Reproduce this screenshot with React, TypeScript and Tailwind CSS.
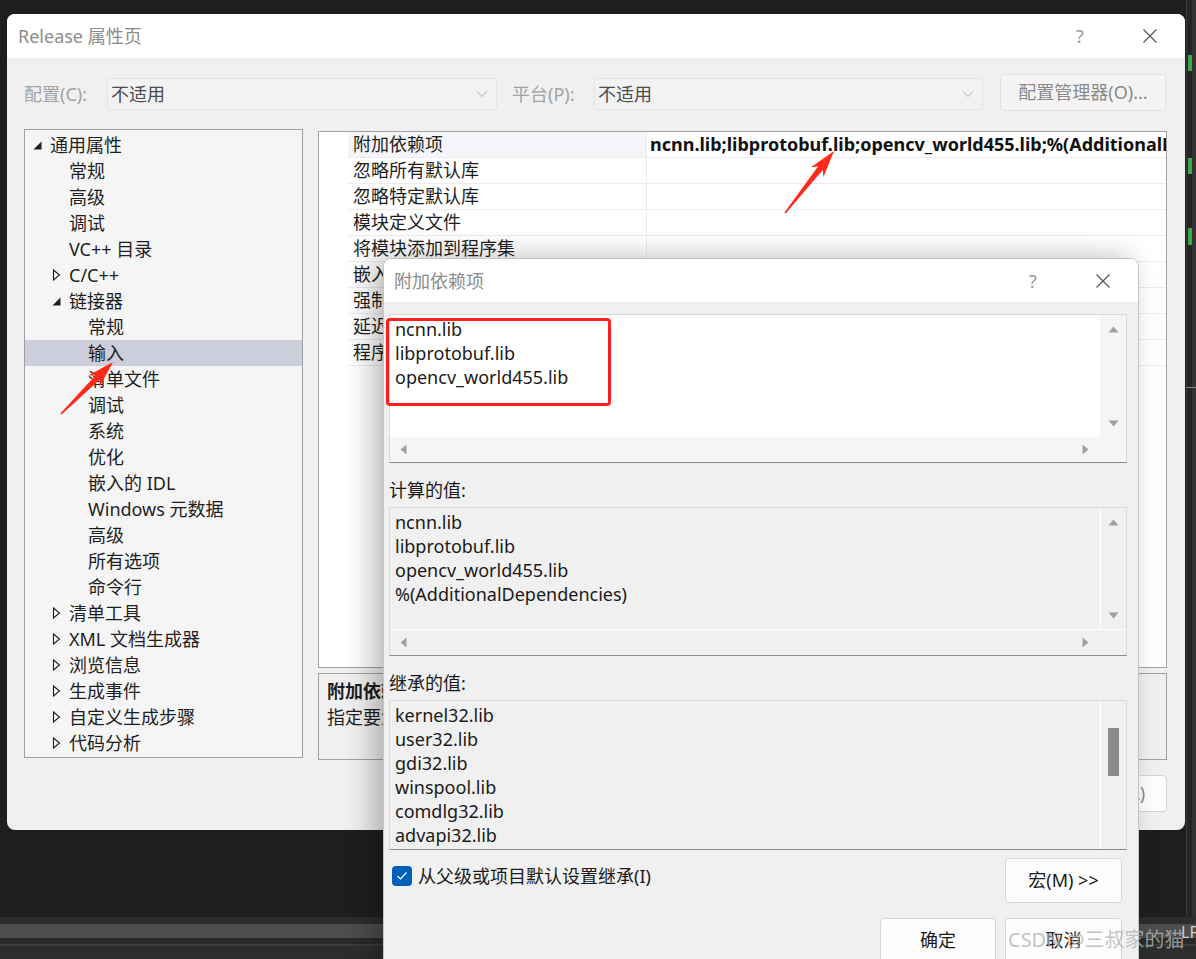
import React from "react";

const FONT = "font-['Noto_Sans','Noto_Sans_CJK_SC',sans-serif]";

type TreeItem = { l: 0 | 1 | 2; t: string; a?: "open" | "closed"; sel?: boolean };

const TREE: TreeItem[] = [
  { l: 0, t: "通用属性", a: "open" },
  { l: 1, t: "常规" },
  { l: 1, t: "高级" },
  { l: 1, t: "调试" },
  { l: 1, t: "VC++ 目录" },
  { l: 1, t: "C/C++", a: "closed" },
  { l: 1, t: "链接器", a: "open" },
  { l: 2, t: "常规" },
  { l: 2, t: "输入", sel: true },
  { l: 2, t: "清单文件" },
  { l: 2, t: "调试" },
  { l: 2, t: "系统" },
  { l: 2, t: "优化" },
  { l: 2, t: "嵌入的 IDL" },
  { l: 2, t: "Windows 元数据" },
  { l: 2, t: "高级" },
  { l: 2, t: "所有选项" },
  { l: 2, t: "命令行" },
  { l: 1, t: "清单工具", a: "closed" },
  { l: 1, t: "XML 文档生成器", a: "closed" },
  { l: 1, t: "浏览信息", a: "closed" },
  { l: 1, t: "生成事件", a: "closed" },
  { l: 1, t: "自定义生成步骤", a: "closed" },
  { l: 1, t: "代码分析", a: "closed" },
];

const GRID = [
  "附加依赖项",
  "忽略所有默认库",
  "忽略特定默认库",
  "模块定义文件",
  "将模块添加到程序集",
  "嵌入托管资源文件",
  "强制符号引用",
  "延迟加载的 DLL",
  "程序集链接资源",
];

function OpenTri() {
  return (
    <svg width="9" height="9" viewBox="0 0 9 9">
      <polygon points="8.5,0.5 8.5,8.5 0.5,8.5" fill="#1e1e1e" />
    </svg>
  );
}
function ClosedTri() {
  return (
    <svg width="9" height="12" viewBox="0 0 9 12">
      <polygon points="1.5,1 7.5,6 1.5,11" fill="none" stroke="#1e1e1e" strokeWidth="1.1" />
    </svg>
  );
}

function CloseX({ color = "#555" }: { color?: string }) {
  return (
    <svg width="16" height="16" viewBox="0 0 16 16">
      <path d="M1.5 1.5 L14.5 14.5 M14.5 1.5 L1.5 14.5" stroke={color} strokeWidth="1.2" fill="none" />
    </svg>
  );
}

function Chevron() {
  return (
    <svg width="12" height="8" viewBox="0 0 12 8">
      <polyline points="1,1.5 6,6.5 11,1.5" fill="none" stroke="#a8a8a8" strokeWidth="1" />
    </svg>
  );
}

function TriUp() {
  return (
    <svg width="11" height="7" viewBox="0 0 11 7">
      <polygon points="5.5,0.5 10.5,6.5 0.5,6.5" fill="#a0a0a0" />
    </svg>
  );
}
function TriDown() {
  return (
    <svg width="11" height="7" viewBox="0 0 11 7">
      <polygon points="0.5,0.5 10.5,0.5 5.5,6.5" fill="#a0a0a0" />
    </svg>
  );
}
function TriLeft() {
  return (
    <svg width="7" height="11" viewBox="0 0 7 11">
      <polygon points="6.5,0.5 6.5,10.5 0.5,5.5" fill="#a0a0a0" />
    </svg>
  );
}
function TriRight() {
  return (
    <svg width="7" height="11" viewBox="0 0 7 11">
      <polygon points="0.5,0.5 6.5,5.5 0.5,10.5" fill="#a0a0a0" />
    </svg>
  );
}

function arrowPoints(x1: number, y1: number, x2: number, y2: number) {
  const dx = x2 - x1;
  const dy = y2 - y1;
  const len = Math.hypot(dx, dy);
  const ux = dx / len;
  const uy = dy / len;
  const nx = -uy;
  const ny = ux;
  const head = 22;
  const neckX = x2 - ux * head;
  const neckY = y2 - uy * head;
  const barbX = x2 - ux * (head + 5);
  const barbY = y2 - uy * (head + 5);
  const p = (x: number, y: number) => `${x.toFixed(1)},${y.toFixed(1)}`;
  return [
    p(x1 + nx * 0.8, y1 + ny * 0.8),
    p(neckX + nx * 3, neckY + ny * 3),
    p(barbX + nx * 8, barbY + ny * 8),
    p(x2, y2),
    p(barbX - nx * 8, barbY - ny * 8),
    p(neckX - nx * 3, neckY - ny * 3),
    p(x1 - nx * 0.8, y1 - ny * 0.8),
  ].join(" ");
}

function TitleBar({ title, h, pl }: { title: string; h: string; pl: string }) {
  return (
    <div className={`${h} bg-white flex items-center shrink-0`}>
      <span className={`${pl} text-[18px] text-[#8c8c8c] leading-none`}>{title}</span>
      <div className="ml-auto flex items-center pr-[12px]">
        <div className="w-[46px] mr-[24px] flex justify-center text-[18px] text-[#9a9a9a] leading-none">?</div>
        <div className="w-[46px] flex justify-center">
          <CloseX />
        </div>
      </div>
    </div>
  );
}

function Btn({
  children,
  w,
  h,
  cls = "",
  color = "text-[#1a1a1a]",
}: {
  children: React.ReactNode;
  w: string;
  h: string;
  cls?: string;
  color?: string;
}) {
  return (
    <div
      className={`${w} ${h} ${cls} ${color} rounded-[4px] border border-[#d5d5d5] bg-[#fdfdfd] flex items-center justify-center text-[18px] shrink-0`}
    >
      {children}
    </div>
  );
}

function Combo() {
  return (
    <div className="mt-[4px] h-[32px] w-full border border-[#e3e3e3] bg-[#f2f2f2] rounded-[3px] flex items-center pl-[3px] pr-[8px]">
      <span className="text-[#4a4a4a]">不适用</span>
      <span className="ml-auto">
        <Chevron />
      </span>
    </div>
  );
}

function MainWindow() {
  return (
    <div className="absolute left-[7px] top-[14px] w-[1178px] h-[816px] rounded-[8px] overflow-hidden bg-[#f0f0f0] flex flex-col">
      <TitleBar title="Release 属性页" h="h-[44px]" pl="pl-[11px]" />

      {/* config row */}
      <div className="flex items-start h-[37px] mt-[16px] pl-[17px] text-[18px]">
        <div className="w-[83px] mt-[4px] h-[32px] flex items-center text-[#a3a3a3]">配置(C):</div>
        <div className="w-[390px]">
          <Combo />
        </div>
        <div className="w-[82px] ml-[15px] mt-[4px] h-[32px] flex items-center text-[#a3a3a3]">平台(P):</div>
        <div className="w-[389px]">
          <Combo />
        </div>
        <div className="w-[166px] h-[37px] ml-[17px] border border-[#e1e1e1] bg-[#f4f4f4] rounded-[4px] flex items-center justify-center text-[#8a8a8a]">
          配置管理器(O)...
        </div>
      </div>

      {/* main area */}
      <div className="flex items-start mt-[18px] pl-[17px]">
        <div className="w-[279px] h-[629px] border border-[#a0a0a0] bg-[#f5f5f5] pt-[2px] text-[18px] text-[#1e1e1e]">
          {TREE.map((it, i) => {
            const pl = it.l === 0 ? "pl-[8px]" : it.l === 1 ? "pl-[27px]" : "pl-[46px]";
            return (
              <div key={i} className={`h-[26px] flex items-center ${pl} ${it.sel ? "bg-[#cccedb]" : ""}`}>
                <div className="w-[17px] flex items-center">
                  {it.a === "open" ? <OpenTri /> : it.a === "closed" ? <ClosedTri /> : null}
                </div>
                <span className="leading-none whitespace-nowrap">{it.t}</span>
              </div>
            );
          })}
        </div>

        <div className="w-[849px] ml-[15px] flex flex-col">
          <div className="mt-[2px] h-[537px] border border-[#a0a0a0] bg-white overflow-hidden">
            {GRID.map((n, i) => (
              <div key={i} className="h-[26px] flex">
                <div className="w-[29px] shrink-0" />
                <div
                  className={`w-[299px] shrink-0 border-b border-r border-[#ececec] flex items-center pl-[5px] text-[18px] text-[#1e1e1e] whitespace-nowrap overflow-hidden ${
                    i === 0 ? "bg-[#f3f5f8]" : ""
                  }`}
                >
                  {n}
                </div>
                <div className="flex-1 min-w-0 border-b border-[#ececec] flex items-center pl-[3px] overflow-hidden">
                  {i === 0 && (
                    <span className="text-[18px] font-bold text-[#111] whitespace-nowrap">
                      ncnn.lib;libprotobuf.lib;opencv_world455.lib;%(AdditionalDependencies)
                    </span>
                  )}
                </div>
              </div>
            ))}
          </div>
          <div className="mt-[5px] h-[87px] border border-[#a0a0a0] px-[8px] pt-[4px] text-[18px] text-[#1e1e1e] leading-[26px]">
            <div className="font-bold">附加依赖项</div>
            <div>指定要添加到链接命令行的附加项。[例如 kernel32.lib]</div>
          </div>
        </div>
      </div>

      {/* bottom buttons */}
      <div className="flex justify-end gap-[9px] pr-[18px] mt-[15px]">
        <Btn w="w-[102px]" h="h-[37px]">确定</Btn>
        <Btn w="w-[102px]" h="h-[37px]">取消</Btn>
        <Btn w="w-[102px]" h="h-[37px]" color="text-[#8a8a8a]">
          应用(A)
        </Btn>
      </div>
    </div>
  );
}

function Lines({ lines }: { lines: string[] }) {
  return (
    <div className="pl-[5px] pt-[2px] text-[18px] leading-[24px] text-[#1a1a1a] whitespace-nowrap">
      {lines.map((l, i) => (
        <div key={i}>{l}</div>
      ))}
    </div>
  );
}

function Dialog() {
  return (
    <div className="absolute left-[383px] top-[258px] w-[756px] h-[720px] rounded-t-[8px] overflow-hidden bg-[#f0f0f0] border border-[#c4c4c4] shadow-[-10px_0_28px_rgba(0,0,0,0.28)] flex flex-col">
      <TitleBar title="附加依赖项" h="h-[43px]" pl="pl-[10px]" />
      <div className="flex flex-col pl-[5px] pr-[11px] pt-[12px]">
        {/* box 1 */}
        <div className="h-[149px] border border-[#dadada] border-b-[#8a8a8a] flex flex-col">
          <div className="flex flex-1 min-h-0">
            <div className="flex-1 bg-white">
              <Lines lines={["ncnn.lib", "libprotobuf.lib", "opencv_world455.lib"]} />
            </div>
            <div className="w-[26px] bg-[#f5f5f5] flex flex-col items-center justify-between pt-[11px] pb-[10px]">
              <TriUp />
              <TriDown />
            </div>
          </div>
          <div className="h-[25px] flex">
            <div className="flex-1 bg-[#f5f5f5] flex items-center justify-between pl-[10px] pr-[11px]">
              <TriLeft />
              <TriRight />
            </div>
            <div className="w-[26px] bg-[#f5f5f5]" />
          </div>
        </div>

        <div className="h-[44px] pt-[15px] text-[18px] leading-[24px] text-[#1a1a1a]">计算的值:</div>

        {/* box 2 */}
        <div className="h-[149px] border border-[#dadada] border-b-[#8a8a8a] flex flex-col bg-[#f0f0f0]">
          <div className="flex flex-1 min-h-0">
            <div className="flex-1">
              <Lines lines={["ncnn.lib", "libprotobuf.lib", "opencv_world455.lib", "%(AdditionalDependencies)"]} />
            </div>
            <div className="w-[26px] border-l border-white flex flex-col items-center justify-between pt-[11px] pb-[10px]">
              <TriUp />
              <TriDown />
            </div>
          </div>
          <div className="h-[26px] flex border-t border-white">
            <div className="flex-1 flex items-center justify-between pl-[10px] pr-[11px]">
              <TriLeft />
              <TriRight />
            </div>
            <div className="w-[26px]" />
          </div>
        </div>

        <div className="h-[44px] pt-[15px] text-[18px] leading-[24px] text-[#1a1a1a]">继承的值:</div>

        {/* box 3 */}
        <div className="h-[150px] border border-[#dadada] border-b-[#8a8a8a] flex bg-[#f0f0f0] overflow-hidden">
          <div className="flex-1">
            <Lines lines={["kernel32.lib", "user32.lib", "gdi32.lib", "winspool.lib", "comdlg32.lib", "advapi32.lib"]} />
          </div>
          <div className="w-[26px] border-l border-white flex flex-col items-center">
            <div className="mt-[27px] w-[11px] h-[48px] bg-[#8b8b8b]" />
          </div>
        </div>

        {/* checkbox + macro */}
        <div className="flex justify-between items-start pr-[5px]">
          <div className="flex items-start pt-[16px] pl-[3px]">
            <div className="w-[20px] h-[20px] rounded-[4px] bg-[#005fb8] flex items-center justify-center">
              <svg width="12" height="10" viewBox="0 0 12 10">
                <polyline points="1.5,5 4.5,8 10.5,1.5" fill="none" stroke="#ffffff" strokeWidth="1.2" />
              </svg>
            </div>
            <span className="ml-[6px] text-[18px] leading-[20px] text-[#1a1a1a]">从父级或项目默认设置继承(I)</span>
          </div>
          <Btn w="w-[117px]" h="h-[45px]" cls="mt-[8px]">
            宏(M) &gt;&gt;
          </Btn>
        </div>

        <div className="flex justify-end gap-[9px] pr-[5px] mt-[15px]">
          <Btn w="w-[116px]" h="h-[45px]">确定</Btn>
          <Btn w="w-[117px]" h="h-[45px]">取消</Btn>
        </div>
      </div>
    </div>
  );
}

export default function App() {
  return (
    <div className={`relative w-[1196px] h-[959px] overflow-hidden bg-[#1e1e1e] ${FONT}`}>
      {/* desktop / IDE background */}
      <div className="flex flex-col h-full">
        <div className="h-[917px]" />
        <div className="h-[7px] bg-[#2d2d2d]" />
        <div className="h-[14px] bg-[#4d4d4d]" />
        <div className="h-[6px] bg-[#2a2a2a]" />
        <div className="h-[2px] bg-[#3c3c3c]" />
        <div className="flex-1 bg-[#2d2d2d]" />
      </div>

      {/* right IDE strip */}
      <div className="absolute left-[1186px] top-0 w-[10px] h-[917px] bg-[#252526] flex">
        <div className="w-[1px] bg-[#3a3a3a]" />
        <div className="w-[5px] relative">
          <div className="absolute left-[1px] top-[55px] w-[4px] h-[16px] bg-[#3fa64a]" />
          <div className="absolute left-[1px] top-[158px] w-[4px] h-[16px] bg-[#3fa64a]" />
          <div className="absolute left-[1px] top-[228px] w-[4px] h-[17px] bg-[#3fa64a]" />
          <div className="absolute left-[-1px] top-[387px] w-[10px] h-[1px] bg-[#8a8a8a]" />
        </div>
        <div className="flex-1 bg-[#333333]" />
      </div>

      <div className="absolute left-[1181px] top-[921px] text-[16px] leading-[22px] text-[#d0d0d0]">LF</div>

      <MainWindow />
      <Dialog />

      {/* annotations */}
      <div className="absolute left-[386px] top-[318px] w-[225px] h-[88px] border-[3px] border-[#ff1f1f] rounded-[4px]" />
      <svg className="absolute left-0 top-0 pointer-events-none" width="1196" height="959">
        <polygon points={arrowPoints(61, 414, 113, 362)} fill="#ff2a1a" />
        <polygon points={arrowPoints(785, 213, 834, 151)} fill="#ff2a1a" />
      </svg>

      {/* watermark */}
      <div className="absolute left-[1008px] top-[927px] text-[20px] leading-[26px] text-[#b4b4b4cc] whitespace-nowrap">
        CSDN @三叔家的猫
      </div>
    </div>
  );
}
